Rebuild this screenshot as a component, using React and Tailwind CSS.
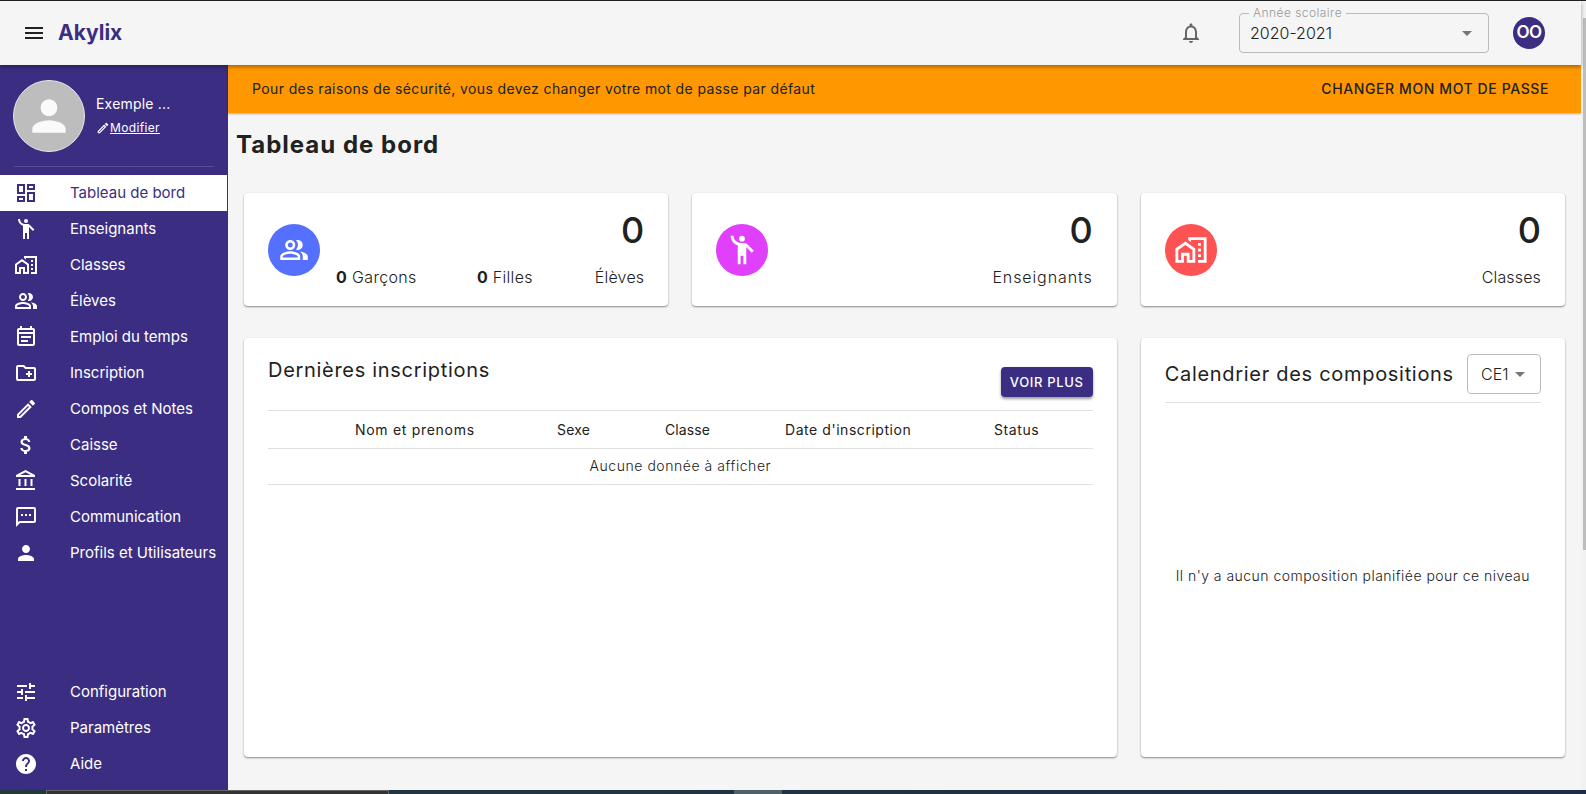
import React from 'react';
import {
  MdMenu, MdOutlineNotifications, MdArrowDropDown, MdPerson,
  MdOutlineDashboard, MdEmojiPeople, MdOutlineHomeWork, MdOutlinePeopleAlt,
  MdOutlineEventNote, MdOutlineCreateNewFolder, MdOutlineEdit, MdAttachMoney,
  MdOutlineAccountBalance, MdOutlineSms, MdTune, MdOutlineSettings, MdHelp,
} from 'react-icons/md';

const NAV_ITEMS = [
  { label: 'Tableau de bord', icon: MdOutlineDashboard, active: true },
  { label: 'Enseignants', icon: MdEmojiPeople },
  { label: 'Classes', icon: MdOutlineHomeWork },
  { label: 'Élèves', icon: MdOutlinePeopleAlt },
  { label: 'Emploi du temps', icon: MdOutlineEventNote },
  { label: 'Inscription', icon: MdOutlineCreateNewFolder },
  { label: 'Compos et Notes', icon: MdOutlineEdit },
  { label: 'Caisse', icon: MdAttachMoney },
  { label: 'Scolarité', icon: MdOutlineAccountBalance },
  { label: 'Communication', icon: MdOutlineSms },
  { label: 'Profils et Utilisateurs', icon: MdPerson },
];

const BOTTOM_ITEMS = [
  { label: 'Configuration', icon: MdTune },
  { label: 'Paramètres', icon: MdOutlineSettings },
  { label: 'Aide', icon: MdHelp },
];

const COLUMNS = [
  { label: '', className: '' },
  { label: 'Nom et prenoms', className: 'tracking-[0.7px]' },
  { label: 'Sexe', className: 'tracking-[0.2px]' },
  { label: 'Classe', className: 'tracking-[0.1px]' },
  { label: "Date d'inscription", className: 'tracking-[0.55px]' },
  { label: 'Status', className: 'tracking-[0.6px]' },
];

function NavItem({ item }) {
  const Icon = item.icon;
  return (
    <div className={`h-9 flex items-center pl-[14px] text-[15px] ${item.active ? 'bg-white text-[#3b2e82] mr-px' : 'text-white'}`}>
      <Icon size={24} className="shrink-0" />
      <span className="ml-8 whitespace-nowrap">{item.label}</span>
    </div>
  );
}

function StatCard({ icon: Icon, color, label, labelClass = '', iconSize = 30, children }) {
  return (
    <div className="h-[113px] bg-white rounded shadow-[0_1px_2px_rgba(0,0,0,0.45)] pl-6 pr-6 flex items-center">
      <div className={`w-[52px] h-[52px] rounded-full flex items-center justify-center text-white shrink-0 ${color}`}>
        <Icon size={iconSize} />
      </div>
      <div className="flex-1 flex flex-col ml-4">
        <div className="text-right text-[36px] leading-[40px] font-medium text-[#212121]">0</div>
        <div className="mt-[15px] flex justify-end text-base leading-6 font-light text-[#212121]">{children}<span className={labelClass}>{label}</span></div>
      </div>
    </div>
  );
}

export default function App() {
  return (
    <div className="w-[1586px] h-[794px] overflow-hidden flex flex-col bg-[#f5f5f5] font-['Inter',sans-serif] text-[#212121]">
      <div className="h-px bg-[#222] shrink-0" />
      <div className="flex-1 min-h-0 flex">
        <div className="flex-1 min-w-0 flex flex-col">
          <header className="h-[64px] shrink-0 flex items-center bg-[#f5f5f5] relative z-10 shadow-[0_2px_4px_rgba(0,0,0,0.35)]">
            <MdMenu size={24} className="ml-[22px] text-[#212121]" />
            <span className="ml-[12px] text-[21px] font-bold text-[#3b2e82]">Akylix</span>
            <div className="ml-auto flex items-center">
              <MdOutlineNotifications size={24} className="text-[#666]" />
              <div className="relative ml-[36px] w-[250px] h-[40px] mt-[-1px] border border-[#bbb] rounded flex items-center pl-[10px] pr-[9px]">
                <span className="absolute -top-[9px] left-[9px] px-1 bg-[#f5f5f5] text-xs leading-4 font-light text-[#999] tracking-[0.45px]">Année scolaire</span>
                <span className="text-base font-light">2020-2021</span>
                <MdArrowDropDown size={24} className="ml-auto text-[#777]" />
              </div>
              <div className="ml-6 mr-[36px] w-8 h-8 rounded-full bg-[#3b2e82] text-white font-semibold text-[17px] tracking-[-0.5px] flex items-center justify-center">OO</div>
            </div>
          </header>
          <div className="flex-1 min-h-0 flex">
            <aside className="w-[228px] shrink-0 bg-[#3b2e82] flex flex-col">
              <div className="pl-[13px] pt-[15px] flex items-center text-white">
                <div className="w-[72px] h-[72px] rounded-full bg-[#bdbdbd] border border-[#e8e8e8] flex items-center justify-center text-[#fafafa]">
                  <MdPerson size={50} />
                </div>
                <div className="ml-[11px] mb-[2px]">
                  <div className="text-sm leading-5 font-normal tracking-[0.2px]">Exemple ...</div>
                  <div className="mt-[6px] flex items-center text-xs leading-4 tracking-[0.35px]">
                    <MdOutlineEdit size={14} />
                    <span className="underline">Modifier</span>
                  </div>
                </div>
              </div>
              <div className="mx-[14px] mt-[14px] h-px bg-white/15" />
              <nav className="mt-2 flex flex-col">
                {NAV_ITEMS.map((item) => <NavItem key={item.label} item={item} />)}
              </nav>
              <nav className="mt-auto mb-2 flex flex-col">
                {BOTTOM_ITEMS.map((item) => <NavItem key={item.label} item={item} />)}
              </nav>
            </aside>
            <main className="flex-1 min-w-0 flex flex-col">
              <div className="h-12 shrink-0 bg-[#ff9800] flex items-center justify-between pl-6 pr-8 text-sm text-[#212121] shadow-[0_1px_2px_rgba(0,0,0,0.3)]">
                <span className="tracking-[0.38px]">Pour des raisons de sécurité, vous devez changer votre mot de passe par défaut</span>
                <span className="font-medium tracking-[0.6px]">CHANGER MON MOT DE PASSE</span>
              </div>
              <h1 className="ml-2 mt-4 text-2xl leading-8 font-bold text-[#212121] tracking-[1px]">Tableau de bord</h1>
              <div className="mt-[32px] ml-4 mr-[16px] grid grid-cols-3 gap-x-6 gap-y-8 grid-rows-[113px_419px]">
                <StatCard icon={MdOutlinePeopleAlt} color="bg-[#5570ff]" label="Élèves" labelClass="tracking-[0.2px]">
                  <span className="mr-auto tracking-[0.35px]"><b className="font-bold">0</b> Garçons</span>
                  <span className="mr-[62px] tracking-[0.3px]"><b className="font-bold">0</b> Filles</span>
                </StatCard>
                <StatCard icon={MdEmojiPeople} color="bg-[#e040fb]" label="Enseignants" labelClass="tracking-[0.9px]" iconSize={34} />
                <StatCard icon={MdOutlineHomeWork} color="bg-[#ff5252]" label="Classes" labelClass="tracking-[0.15px]" iconSize={34} />

                <section className="col-span-2 bg-white rounded shadow-[0_1px_2px_rgba(0,0,0,0.45)] px-6 pt-[18px]">
                  <div className="h-[54px] flex items-start justify-between">
                    <h2 className="text-xl leading-7 font-normal tracking-[0.7px]">Dernières inscriptions</h2>
                    <button className="mt-[11px] h-[30px] w-[92px] pt-px bg-[#3b2e82] text-white text-[13px] font-medium tracking-[0.65px] rounded shadow-[0_2px_3px_rgba(0,0,0,0.4)]">VOIR PLUS</button>
                  </div>
                  <div className="border-t border-[#e0e0e0] h-[38px] grid grid-cols-[87px_202px_108px_120px_209px_1fr] items-center text-sm font-normal">
                    {COLUMNS.map((col) => <span key={col.label} className={col.className}>{col.label}</span>)}
                  </div>
                  <div className="border-y border-[#e0e0e0] h-[37px] pb-[2px] flex items-center justify-center text-sm font-light tracking-[0.55px]">Aucune donnée à afficher</div>
                </section>

                <section className="bg-white rounded shadow-[0_1px_2px_rgba(0,0,0,0.45)] px-6 flex flex-col">
                  <div className="h-[65px] shrink-0 pt-2 border-b border-[#e0e0e0] flex items-center justify-between">
                    <h2 className="text-xl leading-7 font-normal whitespace-nowrap tracking-[0.7px]">Calendrier des compositions</h2>
                    <div className="w-[74px] h-[40px] border border-[#bbb] rounded flex items-center pl-[13px] text-base font-light">
                      CE1
                      <MdArrowDropDown size={24} className="text-[#777]" />
                    </div>
                  </div>
                  <div className="flex-1 pb-2 flex items-center justify-center text-sm font-light tracking-[0.47px]">Il n'y a aucun composition planifiée pour ce niveau</div>
                </section>
              </div>
            </main>
          </div>
        </div>
        <div className="w-[5px] shrink-0 bg-[#f1f1f1] pt-[17px] pl-[2px]">
          <div className="h-[532px] bg-[#bdbdbd]" />
        </div>
      </div>
      <div className="h-1 shrink-0 flex bg-[linear-gradient(90deg,#22393f,#1e2c4a)]">
        <div className="w-[46px]" />
        <div className="w-[343px] bg-[#333] border-t border-x border-[#666]" />
        <div className="w-[345px]" />
        <div className="w-[48px] bg-[#4f6068]" />
      </div>
    </div>
  );
}
